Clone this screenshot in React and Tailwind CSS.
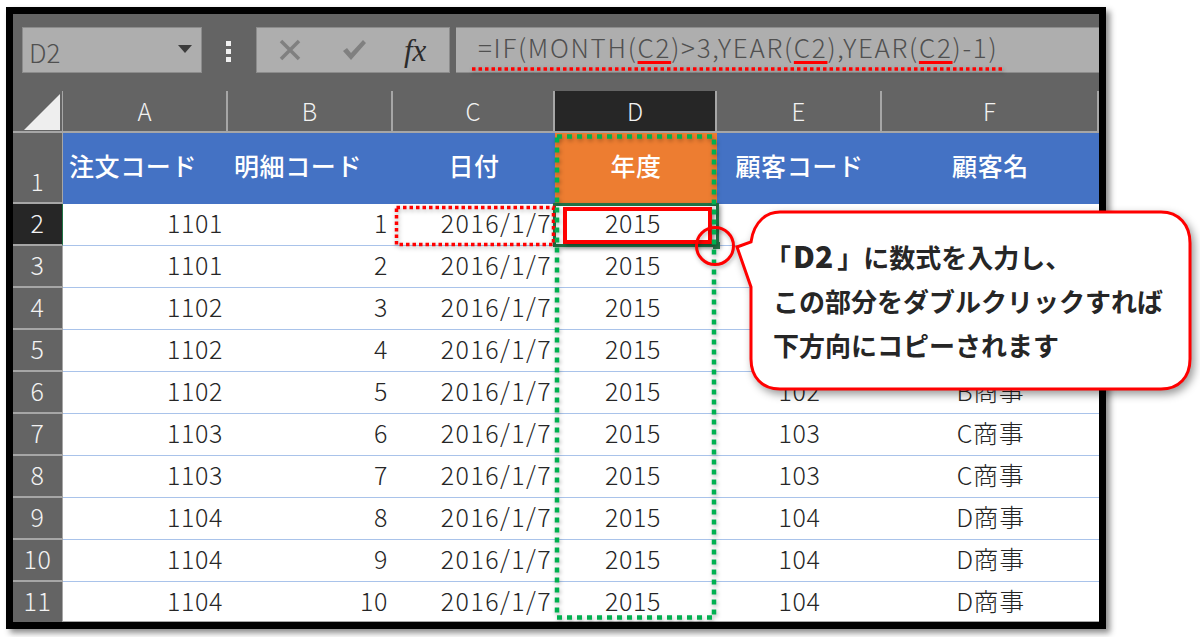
import React from "react";

const rows = [
  [2, 1101, 1, "101", "A商事"],
  [3, 1101, 2, "101", "A商事"],
  [4, 1102, 3, "102", "B商事"],
  [5, 1102, 4, "102", "B商事"],
  [6, 1102, 5, "102", "B商事"],
  [7, 1103, 6, "103", "C商事"],
  [8, 1103, 7, "103", "C商事"],
  [9, 1104, 8, "104", "D商事"],
  [10, 1104, 9, "104", "D商事"],
  [11, 1104, 10, "104", "D商事"],
];

const colHeads = [
  { label: "A", w: "w-[165px]" },
  { label: "B", w: "w-[165px]" },
  { label: "C", w: "w-[162px]" },
  { label: "D", w: "w-[162px]", active: true },
  { label: "E", w: "w-[165px]" },
  { label: "F", w: "w-[217px]" },
];

function Ref({ children }) {
  return <span className="underline decoration-[#ff0000] decoration-[3px] underline-offset-[3px] [text-decoration-skip-ink:none]">{children}</span>;
}

function FormulaBar() {
  return (
    <div className="flex h-[77px] items-start bg-[#646464] pt-[13px]">
      <div className="ml-[9px] flex h-[46px] w-[180px] items-center justify-between border border-[#8c8c8c] bg-[#aeaeae] pl-[6px] pr-[9px] text-[26px] font-light text-[#505050]">
        <span className="mt-[3px]">D2</span>
        <svg width="14" height="8" viewBox="0 0 14 8" className="mb-[2px]"><path d="M0 0h14L7 8z" fill="#3c3c3c" /></svg>
      </div>
      <div className="ml-[24px] mt-[14px] flex w-[6px] flex-col gap-[3px]">
        <i className="h-[5px] w-[5px] bg-[#f0f0f0]" />
        <i className="h-[5px] w-[5px] bg-[#f0f0f0]" />
        <i className="h-[5px] w-[5px] bg-[#f0f0f0]" />
      </div>
      <div className="ml-[24px] flex h-[46px] w-[194px] items-center border border-[#8c8c8c] bg-[#aeaeae]">
        <svg width="22" height="22" viewBox="0 0 22 22" className="ml-[22px]"><path d="M2 2l18 18M20 2L2 20" stroke="#808080" strokeWidth="3.5" /></svg>
        <svg width="26" height="22" viewBox="0 0 26 22" className="ml-[40px]"><path d="M2 12l4-3 4 5L22 1l3 3-15 17z" fill="#808080" /></svg>
        <span className="ml-[37px] font-['Liberation_Serif',serif] text-[31px] italic leading-none text-[#2b2b2b]">fx</span>
      </div>
      <div className="ml-[6px] h-[46px] flex-1 border-y border-[#8c8c8c] bg-[#aeaeae] pl-[22px] text-[26px] font-light leading-[38px] tracking-[1.7px] text-[#505050]">
        =IF(MONTH(<Ref>C2</Ref>)&gt;3,YEAR(<Ref>C2</Ref>),YEAR(<Ref>C2</Ref>)-1)
      </div>
    </div>
  );
}

function ColumnHeader() {
  return (
    <div className="flex h-[42px] border-b-[2px] border-[#a6a6a6] bg-[#646464]">
      <div className="relative w-[50px] border-r border-[#a6a6a6]">
        <svg width="36" height="36" viewBox="0 0 36 36" className="absolute left-[11px] top-[3px]"><path d="M36 0v36H0z" fill="#eeeeee" /></svg>
      </div>
      {colHeads.map((c) => (
        <div
          key={c.label}
          className={`${c.w} flex items-center justify-center border-r-2 border-[#a6a6a6] text-[24px] font-light text-[#f2f2f2] ${c.active ? "bg-[#262626]" : ""}`}
        >
          {c.label}
        </div>
      ))}
    </div>
  );
}

function TitleRow() {
  return (
    <div className="flex h-[71px] text-[25px] font-medium tracking-[0.6px] text-white">
      <div className="flex w-[50px] items-end justify-center border-r border-b-2 border-[#a6a6a6] bg-[#646464] pb-[3px] text-[24px] font-light text-[#f2f2f2]">1</div>
      <div className="flex w-[165px] items-center bg-[#4472c4] pb-[5px] pl-[6px]">注文コード</div>
      <div className="flex w-[165px] items-center bg-[#4472c4] pb-[5px] pl-[6px]">明細コード</div>
      <div className="flex w-[162px] items-center justify-center bg-[#4472c4] pb-[5px]">日付</div>
      <div className="flex w-[162px] items-center justify-center bg-[#ed7d31] pb-[5px]">年度</div>
      <div className="flex w-[165px] items-center justify-center bg-[#4472c4] pb-[5px]">顧客コード</div>
      <div className="flex w-[217px] items-center justify-center bg-[#4472c4] pb-[5px]">顧客名</div>
    </div>
  );
}

function DataRow({ row }) {
  const [n, order, line, cust, name] = row;
  const active = n === 2;
  const last = n === 11;
  return (
    <div className={`flex text-[25px] font-light leading-[37px] tracking-[0.6px] text-[#262626] ${last ? "h-[40px]" : "h-[42px]"}`}>
      <div className={`w-[50px] border-r text-center text-[#f2f2f2] ${last ? "" : "border-b-2"} ${active ? "border-b-[#a6a6a6] border-r-[#217346] bg-[#262626]" : "border-[#a6a6a6] bg-[#646464]"}`}>{n}</div>
      <div className={`flex flex-1 bg-white ${last ? "border-b border-[#a6a6a6]" : "border-b border-[#a9c3ea]"}`}>
        <div className="w-[165px] pr-[5px] text-right">{order}</div>
        <div className="w-[165px] pr-[5px] text-right">{line}</div>
        <div className="w-[162px] pr-[3px] text-right tracking-[1.4px]">2016/1/7</div>
        <div className="w-[162px] pr-[6px] text-center">2015</div>
        <div className="w-[165px] text-center">{cust}</div>
        <div className="w-[217px] text-center">{name}</div>
      </div>
    </div>
  );
}

function Overlays() {
  return (
    <>
      {/* 選択セル */}
      <div className="absolute left-[540px] top-[189px] h-[44px] w-[166px] border-[3px] border-[#217346] shadow-[2px_2px_4px_rgba(0,0,0,0.35)]" />
      <i className="absolute left-[700px] top-[228px] h-[7px] w-[7px] bg-[#217346]" />
      {/* 赤枠・点線 */}
      <div className="absolute left-[550px] top-[193px] h-[37px] w-[149px] border-[4px] border-[#ff0000] shadow-[2px_2px_4px_rgba(0,0,0,0.4)]" />
      <svg className="absolute left-0 top-0 h-[608px] w-[1086px] drop-shadow-[1px_2px_2px_rgba(0,0,0,0.3)]" viewBox="0 0 1086 608" fill="none">
        <rect x="383.5" y="193.5" width="157" height="37" stroke="#ff0000" strokeWidth="3.5" strokeDasharray="3.5 3" />
        <path d="M459 55H992" stroke="#ff0000" strokeWidth="3.5" strokeDasharray="3.5 3" />
        <rect x="544" y="122.5" width="157" height="481" stroke="#00b050" strokeWidth="4.5" strokeDasharray="5 5" />
        <circle cx="702" cy="232" r="18.5" stroke="#ff0000" strokeWidth="3" />
      </svg>
    </>
  );
}

function Callout() {
  return (
    <div className="absolute left-[720px] top-[191px] h-[190px] w-[462px]">
      <svg className="absolute inset-0 h-full w-full drop-shadow-[3px_4px_4px_rgba(0,0,0,0.4)]" viewBox="0 0 462 190" fill="none">
        <path
          d="M4 42 L18 37 C21 15 35 7 47 7 H428 C446 7 457 20 457 38 V154 C457 172 446 184 428 184 H47 C29 184 18 172 18 154 V82 Z"
          fill="#ffffff"
          stroke="#ff0000"
          strokeWidth="3"
        />
      </svg>
      <div className="relative pl-[40px] pt-[28px] text-[26px] font-bold leading-[44px] text-[#262626]">
        <p className="-ml-[8px]">「<span className="ml-[2px] mr-[4px] text-[30px] font-black">D2</span>」に数式を入力し、</p>
        <p>この部分をダブルクリックすれば</p>
        <p>下方向にコピーされます</p>
      </div>
    </div>
  );
}

export default function App() {
  return (
    <div className="h-[637px] w-[1200px] overflow-hidden bg-white pl-[6px] pt-[7px] font-['Noto_Sans_CJK_JP','Noto_Sans',sans-serif]">
      <div className="h-[622px] w-[1100px] border-[7px] border-black shadow-[4px_4px_6px_rgba(0,0,0,0.45)]">
        <div className="relative h-[608px] w-[1086px]">
          <FormulaBar />
          <ColumnHeader />
          <TitleRow />
          {rows.map((r) => (
            <DataRow key={r[0]} row={r} />
          ))}
          <Overlays />
          <Callout />
        </div>
      </div>
    </div>
  );
}
